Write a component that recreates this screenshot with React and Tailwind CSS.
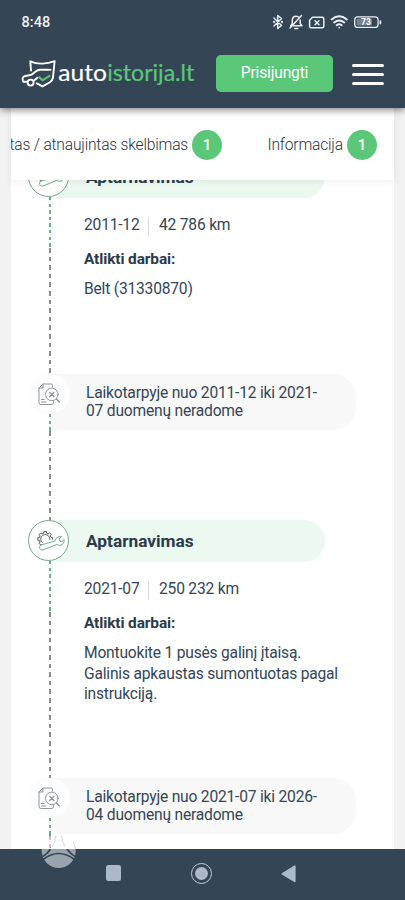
import React from "react";

const entries = [
  {
    type: "service",
    height: "h-[218px]",
    greenLine: "h-[51px]",
    date: "2011-12",
    mileage: "42 786 km",
    works: ["Belt (31330870)"],
  },
  { type: "gap", height: "h-[146px]", lines: ["Laikotarpyje nuo 2011-12 iki 2021-", "07 duomenų neradome"] },
  {
    type: "service",
    height: "h-[258px]",
    greenLine: "h-[51px]",
    date: "2021-07",
    mileage: "250 232 km",
    works: ["Montuokite 1 pusės galinį įtaisą.", "Galinis apkaustas sumontuotas pagal", "instrukciją."],
  },
  { type: "gap", height: "h-[146px]", lines: ["Laikotarpyje nuo 2021-07 iki 2026-", "04 duomenų neradome"] },
];

const App = () => (
  <div className="relative flex h-[900px] w-[405px] flex-col overflow-hidden bg-[#f2f2f2] font-['Roboto',sans-serif] text-[#344656]">
    {/* Header */}
    <header className="z-20 h-[108px] shrink-0 bg-[#344656] shadow-[0_1px_8px_rgba(0,0,0,0.6)]">
      <StatusBar />
      <div className="flex h-[58px] items-center pl-[21px]">
        <Logo />
        <button className="ml-[20px] flex h-[37px] w-[117px] items-center justify-center rounded-[5px] bg-[#5ac878] pt-[1px] text-[15.6px] leading-none tracking-[-0.18px] text-white">
          Prisijungti
        </button>
        <div className="ml-[19px] flex w-8 flex-col gap-[6px] pt-[3px]">
          <span className="h-[3.2px] rounded-full bg-white" />
          <span className="h-[3.2px] rounded-full bg-white" />
          <span className="h-[3.2px] rounded-full bg-white" />
        </div>
      </div>
    </header>

    {/* Tabs */}
    <div className="z-10 mx-[11px] flex h-[72px] w-[383px] shrink-0 items-center overflow-hidden bg-white pt-[2px] text-[15.6px] font-light tracking-[-0.2px] text-[#263440] shadow-[0_1px_8px_rgba(0,0,0,0.07)]">
      <div className="flex w-[211px] shrink-0 items-center justify-end">
        <span className="whitespace-nowrap pt-[2px]">tas / atnaujintas skelbimas</span>
        <Badge />
      </div>
      <div className="ml-[45.5px] flex items-center">
        <span className="whitespace-nowrap pt-[2px]">Informacija</span>
        <Badge />
      </div>
    </div>

    {/* Timeline */}
    <main className="mx-[11px] min-h-0 flex-1 overflow-hidden bg-white">
      <div className="-mt-[24px] flex flex-col">
        {entries.map((entry, i) =>
          entry.type === "service" ? <ServiceEntry key={i} {...entry} /> : <GapEntry key={i} {...entry} />
        )}
      </div>
    </main>

    {/* Android navigation */}
    <nav className="flex h-[51px] shrink-0 items-center bg-[#344656] pl-[106px]">
      <span className="-mt-[3px] h-[16px] w-[15px] rounded-[2.5px] bg-[#adb9c8]" />
      <span className="-mt-[2px] ml-[69.5px] flex h-[21px] w-[21px] items-center justify-center rounded-full border-[1.6px] border-[#c3ccd6]">
        <span className="h-[13px] w-[13px] rounded-full bg-[#adb9c8]" />
      </span>
      <svg className="-mt-[2px] ml-[69.5px]" width="15" height="18" viewBox="0 0 15 18">
        <path d="M.8 8.2 13.3.5Q14.6 0 14.6 1.4V16.2Q14.6 18 13.3 17L.8 9.5Q0 8.9.8 8.2Z" fill="#adb9c8" />
      </svg>
    </nav>

    <Watermark />
  </div>
);

const StatusBar = () => (
  <div className="flex h-[44px] items-center pl-[21.5px] text-white">
    <span className="w-[250.5px] pt-[2px] text-[14.5px] font-medium leading-none tracking-[0.1px] text-[#edf2f6]">8:48</span>
    <svg width="110" height="18" viewBox="272 13 110 18" fill="none" stroke="#e9eef3" strokeWidth="1.5" strokeLinecap="round" strokeLinejoin="round">
      <path d="m274 18 7.5 7.5-3.8 3V15.5l3.8 3L274 26" />
      <circle cx="274.2" cy="22" r=".4" fill="#e9eef3" />
      <circle cx="282" cy="22" r=".4" fill="#e9eef3" />
      <path d="M292.3 24.8v-4c0-2.7 1.6-4.6 3.9-4.6 1.3 0 2.3.5 3 1.4M300.2 20v3.5l1.7 2.3h-8.5M292.3 23.8l-1.6 2M290 28l11.5-12.5M294.8 28.6h3" />
      <path d="M312.5 17.2h9.7q1.6 0 1.6 1.6v7.4q0 1.6-1.6 1.6h-11q-1.6 0-1.6-1.6v-6zM315 20.7l4 4m0-4-4 4" />
      <g strokeWidth="1.9">
        <path d="M331.6 19.5q7.6-6.3 15.2 0M334.1 22.5q5.1-4.2 10.2 0M336.7 25.2q2.5-2 5 0" />
      </g>
      <circle cx="339.2" cy="27.6" r=".9" fill="#e9eef3" stroke="none" />
      <rect x="354.7" y="16.8" width="23.4" height="10.6" rx="3" strokeWidth="1.3" />
      <rect x="356.5" y="18.6" width="15.5" height="7" rx="1.4" fill="#75828f" stroke="none" />
      <path d="M380.4 21v2.7" strokeWidth="1.6" />
      <text x="366" y="25.2" textAnchor="middle" fontSize="8.6" fontWeight="700" fill="#fff" stroke="none">73</text>
    </svg>
  </div>
);

const Logo = () => (
  <svg width="175" height="36" viewBox="21 58 175 36" fill="none">
    <g stroke="#fff" strokeWidth="1.9" strokeLinejoin="round" strokeLinecap="round">
      <path d="M31 73.5 30.3 64.3Q36.5 67 42.5 66.6 48.5 66.5 54.6 64.2L53 80.5Q52.5 83.8 49.5 85.5L42.5 89.3 36.8 86.3" />
      <path d="M50.5 72.8H40.2Q37.5 73 35.7 74.5L31.5 77.8 24.3 79.3Q22.5 80 22.6 81.8L23.1 84.7H26.8" />
      <path d="M34 83.5 37.5 80.8" />
      <circle cx="30.6" cy="85.6" r="3" />
    </g>
    <path d="m38.5 79.6 4.2 3.7 7.5-5" stroke="#5ac878" strokeWidth="2.1" />
    <g fontFamily="Lato, sans-serif" fontSize="22.5" fontWeight="400" strokeWidth=".2">
      <text x="58.3" y="83.6" fill="#fff" stroke="#fff" textLength="48.5" lengthAdjust="spacingAndGlyphs">auto</text>
      <text x="107.3" y="83.6" fill="#5ac878" stroke="#5ac878" textLength="87" lengthAdjust="spacingAndGlyphs">istorija.lt</text>
    </g>
  </svg>
);

const Badge = () => (
  <span className="ml-[4px] flex h-[30px] w-[30px] shrink-0 items-center justify-center rounded-full bg-[#5ac878] text-[15px] font-medium text-white">
    1
  </span>
);

const GreenLine = ({ className }) => (
  <span className={`ml-[2px] w-[2px] shrink-0 bg-[repeating-linear-gradient(to_bottom,#66b57e_0px,#66b57e_3.4px,transparent_3.4px,transparent_6.6px)] ${className}`} />
);

const GreyLine = () => (
  <span className="ml-[2px] w-[2px] flex-1 bg-[repeating-linear-gradient(to_bottom,#8c8c8c_0px,#8c8c8c_4.6px,transparent_4.6px,transparent_8.6px)]" />
);

const ServiceEntry = ({ height, greenLine, date, mileage, works }) => (
  <section className={`flex pl-[17px] ${height}`}>
    <div className="z-[1] flex w-[42px] shrink-0 flex-col items-center">
      <div className="mr-[1px] flex h-[41px] w-[41px] shrink-0 items-center justify-center rounded-full border-[1.2px] border-[#6fa98c] bg-white">
        <ServiceIcon />
      </div>
      <GreenLine className={greenLine} />
      <GreyLine />
    </div>
    <div className="-ml-[21px]">
      <h2 className="flex h-[42px] w-[276px] items-center rounded-r-[21px] bg-[#ecf9f1] pl-[37px] pt-[1px] text-[17.3px] font-bold text-[#2b3b4a]">
        Aptarnavimas
      </h2>
      <div className="pl-[35px] text-[15.6px] tracking-[-0.2px]">
        <div className="mt-[18px] flex h-[20px] items-center">
          <span className="w-[55px] whitespace-nowrap">{date}</span>
          <span className="ml-[9px] mr-[10px] h-[19px] w-px bg-[#d9dcdf]" />
          <span className="whitespace-nowrap">{mileage}</span>
        </div>
        <h3 className="mt-[13px] h-[20px] text-[15.4px] font-bold leading-[20px] tracking-[-0.1px] text-[#2b3b4a]">Atlikti darbai:</h3>
        <div className="mt-[10px] whitespace-nowrap leading-[20.5px]">
          {works.map((line) => (
            <p key={line}>{line}</p>
          ))}
        </div>
      </div>
    </div>
  </section>
);

const GapEntry = ({ height, lines }) => (
  <section className={`flex pl-[17px] ${height}`}>
    <div className="z-[1] flex w-[42px] shrink-0 flex-col items-center">
      <div className="flex h-[40px] w-[42px] shrink-0 items-center justify-center rounded-full bg-[#fdfdfd]">
        <NoDataIcon />
      </div>
      <GreenLine className="h-[17px]" />
      <GreyLine />
    </div>
    <div className="-ml-[21px] flex h-[56px] w-[307px] flex-col justify-center rounded-r-[22px] bg-[#f8f8f8] pl-[37px] pt-[1px] text-[15.6px] leading-[17.5px] tracking-[-0.2px]">
      {lines.map((line) => (
        <p key={line} className="whitespace-nowrap">{line}</p>
      ))}
    </div>
  </section>
);

const ServiceIcon = () => (
  <svg className="shrink-0" width="32" height="22" viewBox="0 0 32 22" fill="none" strokeWidth="1" strokeLinejoin="round">
    <g transform="translate(12.2 9)" stroke="#46525c">
      <path d="M-3.1 5.1-4.3 6.2-6.2 4.3-5.1 3.1-5.8 1.4-7.4 1.3V-1.3L-5.8-1.4-5.1-3.1-6.2-4.3-4.3-6.2-3.1-5.1-1.4-5.8-1.3-7.4H1.3L1.4-5.8 3.1-5.1 4.3-6.2 6.2-4.3 5.1-3.1 5.8-1.4 7.4-1.3V.5" />
      <path d="M-2.8 3.6A4.5 4.5 0 1 1 4.5.6" />
    </g>
    <path
      d="M8 15 22 11Q22.5 7.2 26.5 6.3L28.6 6.6 26 9 27 11.2 29.3 11.4 31 9.4Q31.6 14 28 15.2 25.5 15.6 23.8 14.4L10 20Q7.5 20.6 6.6 18.3 6.2 15.8 8 15Z"
      fill="#fff"
      stroke="#6fb48a"
    />
  </svg>
);

const NoDataIcon = () => (
  <svg width="22" height="23" viewBox="0 0 22 23" fill="none" stroke="#858b90" strokeWidth=".9" strokeLinecap="round" strokeLinejoin="round">
    <path d="M14.5 4V2.2Q14.5 1 13.3 1H5L1 5v14.5Q1 21.5 3 21.5H13.5Q15.5 21.5 15.5 19.5V18.5M5 1v4H1" />
    <path d="M3.5 16.5H6M3.5 19H8" />
    <circle cx="13.8" cy="11.4" r="6.3" />
    <path d="m18.4 16 3 3" strokeWidth="1.1" />
    <path d="m11.7 9.3 4.2 4.2m0-4.2-4.2 4.2" strokeWidth="1.2" />
  </svg>
);

/* translucent mark over the bottom edge */
const Watermark = () => (
  <svg className="absolute left-[41px] top-[833px] z-30" width="36" height="36" viewBox="0 0 36 36" fill="none">
    <mask id="roads">
      <circle cx="17.7" cy="18" r="17" fill="#fff" />
      <path d="M14 0Q13 18 0 24.5M21.4 0Q22.4 18 36 24.5M2 26.5Q17.7 14.5 33.5 26.5" stroke="#000" strokeWidth="1.7" />
    </mask>
    <rect width="36" height="36" fill="#fff" fillOpacity=".5" mask="url(#roads)" />
    <path d="M14.8 2.5Q14.4 9.5 11 14M20.6 2.5Q21 9.5 24.4 14M32 9Q34 12 34.5 16" stroke="#8d969e" strokeOpacity=".45" strokeWidth=".8" />
  </svg>
);

export default App;
